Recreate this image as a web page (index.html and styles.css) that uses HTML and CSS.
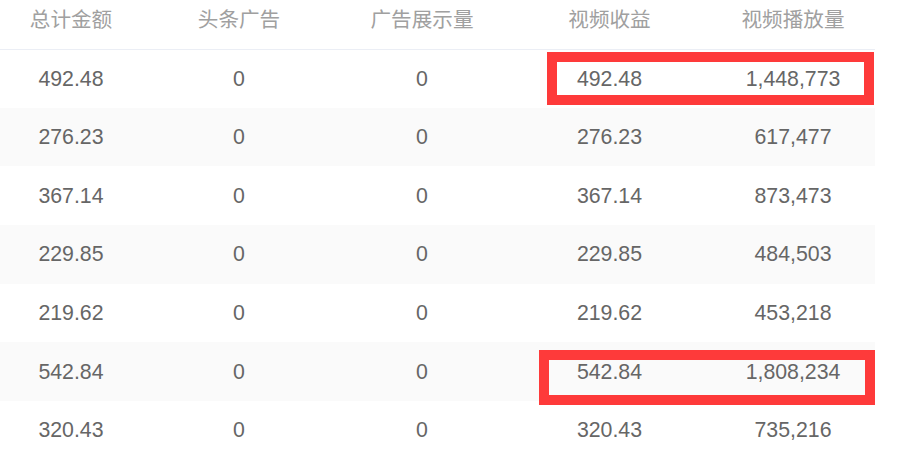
FILE: index.html
```html
<!DOCTYPE html>
<html>
<head>
<meta charset="utf-8">
<link rel="stylesheet" href="styles.css">
</head>
<body>
<div class="wrap">
  <table class="grid">
    <colgroup>
      <col class="c1"><col class="c2"><col class="c3"><col class="c4"><col class="c5">
    </colgroup>
    <thead>
      <tr><th>总计金额</th><th>头条广告</th><th>广告展示量</th><th>视频收益</th><th>视频播放量</th></tr>
    </thead>
    <tbody>
      <tr><td>492.48</td><td>0</td><td>0</td><td>492.48</td><td>1,448,773</td></tr>
      <tr class="alt"><td>276.23</td><td>0</td><td>0</td><td>276.23</td><td>617,477</td></tr>
      <tr><td>367.14</td><td>0</td><td>0</td><td>367.14</td><td>873,473</td></tr>
      <tr class="alt"><td>229.85</td><td>0</td><td>0</td><td>229.85</td><td>484,503</td></tr>
      <tr><td>219.62</td><td>0</td><td>0</td><td>219.62</td><td>453,218</td></tr>
      <tr class="alt"><td>542.84</td><td>0</td><td>0</td><td>542.84</td><td>1,808,234</td></tr>
      <tr><td>320.43</td><td>0</td><td>0</td><td>320.43</td><td>735,216</td></tr>
    </tbody>
  </table>
  <div class="mark mark1"></div>
  <div class="mark mark2"></div>
</div>
</body>
</html>
```
FILE: styles.css
```css
html, body {
  margin: 0;
  padding: 0;
  background: #fff;
}
.wrap {
  position: relative;
  width: 905px;
  height: 461px;
  overflow: hidden;
}
.grid {
  width: 875px;
  border-collapse: collapse;
  table-layout: fixed;
  font-family: "Liberation Sans", "Noto Sans CJK SC", Arial, sans-serif;
  font-size: 21.3px;
}
.c1 { width: 142px; }
.c2 { width: 194px; }
.c3 { width: 172px; }
.c4 { width: 203px; }
.c5 { width: 164px; }
.grid th {
  height: 49px;
  padding: 0 0 13px 0;
  box-sizing: border-box;
  font-weight: normal;
  color: #a0a0a0;
  text-align: center;
  border-bottom: 1px solid #ebeef5;
  vertical-align: middle;
  font-family: "Noto Sans CJK SC", sans-serif;
  font-size: 20.6px;
}
.grid td {
  height: 58.7px;
  padding: 1px 0 0 0;
  box-sizing: border-box;
  text-align: center;
  vertical-align: middle;
  color: #666;
}
.grid tr.alt td {
  background: #fafafa;
}
.mark {
  position: absolute;
  border: 10px solid #fe3a3a;
  box-sizing: border-box;
}
.mark1 {
  left: 547px;
  top: 52px;
  width: 327px;
  height: 53px;
}
.mark2 {
  left: 539px;
  top: 350px;
  width: 336px;
  height: 55px;
}
```
